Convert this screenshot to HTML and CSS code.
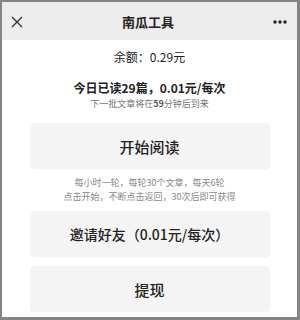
FILE: index.html
```html
<!DOCTYPE html>
<html lang="zh">
<head>
<meta charset="utf-8">
<link rel="stylesheet" href="styles.css">
</head>
<body>
<div class="frame">
  <header class="bar">
    <svg class="close" width="12" height="12" viewBox="0 0 12 12"><path d="M1 1L11 11M11 1L1 11" stroke="#333" stroke-width="1.4" fill="none"/></svg>
    <div class="title">南瓜工具</div>
    <svg class="more" width="14" height="4" viewBox="0 0 14 4"><circle cx="2" cy="2" r="1.7" fill="#222"/><circle cx="7" cy="2" r="1.7" fill="#222"/><circle cx="12" cy="2" r="1.7" fill="#222"/></svg>
  </header>
  <main class="content">
    <div class="balance">余额：0.29元</div>
    <div class="today">今日已读29篇，0.01元/每次</div>
    <div class="next">下一批文章将在<b>59</b>分钟后到来</div>
    <div class="btn btn-read">开始阅读</div>
    <div class="note">每小时一轮，每轮30个文章，每天6轮<br>点击开始，不断点击返回，30次后即可获得</div>
    <div class="btn btn-invite">邀请好友（0.01元/每次）</div>
    <div class="btn btn-last">提现</div>
  </main>
</div>
</body>
</html>
```
FILE: styles.css
```css
html, body { margin: 0; padding: 0; }
body { font-family: "Noto Sans CJK SC", "Noto Sans", sans-serif; background: #fff; }
.frame {
  width: 300px; height: 320px; box-sizing: border-box;
  border-style: solid; border-color: #858585;
  border-width: 2px 3px 3px 2px;
  background: #fff; overflow: hidden;
  display: flex; flex-direction: column;
}
.bar {
  height: 38px; flex: none; background: #ededed;
  display: flex; align-items: center; justify-content: space-between;
  padding: 0 10px 0 8px;
}
.close { margin-left: 1px; margin-top: 1px; }
.title { font-size: 13px; font-weight: 700; color: #222; margin-top: 1px; }
.more { margin-top: 1px; }
.content { display: flex; flex-direction: column; align-items: center; }
.balance { margin-top: 8px; font-size: 12px; line-height: 18px; color: #222; }
.today { margin-top: 15px; font-size: 12px; font-weight: 700; line-height: 14px; color: #222; }
.next { margin-top: 4px; font-size: 9px; line-height: 10px; color: #777; }
.next b { font-weight: 700; color: #555; }
.btn {
  width: 240px; height: 46px; flex: none;
  background: #f4f4f4; border-radius: 4px;
  display: flex; align-items: center; justify-content: center;
  font-size: 15px; color: #222; font-weight: 500;
}
.btn-read { margin-top: 14px; }
.note { margin-top: 7px; font-size: 9px; line-height: 14px; color: #888; text-align: center; }
.btn-invite { margin-top: 7px; font-size: 14px; }
.btn-last { margin-top: 9px; }
```
